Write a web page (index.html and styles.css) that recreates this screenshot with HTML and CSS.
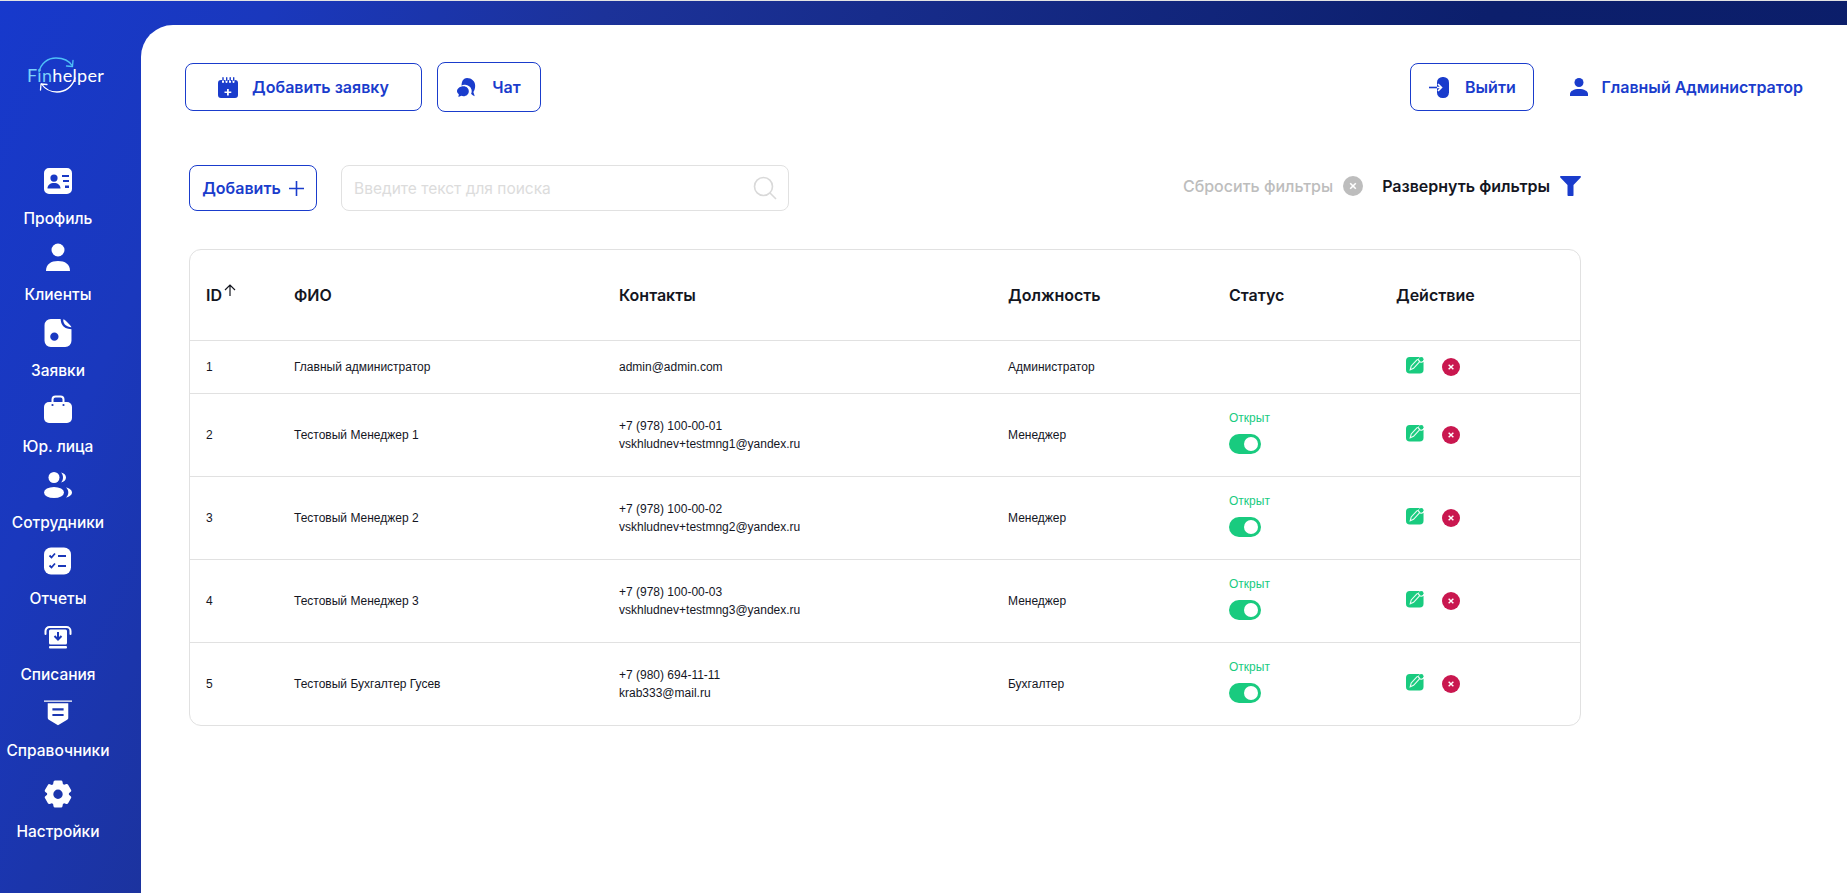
FILE: index.html
```html
<!DOCTYPE html>
<html lang="ru">
<head>
  <meta charset="UTF-8">
  <meta name="viewport" content="width=device-width, initial-scale=1.0">
  <title>Finhelper</title>
  <link rel="stylesheet" href="styles.css">
</head>
<body>
  <div class="app">

    <!-- Left menu -->
    <aside class="sidebar">
      <div class="logo">
        <svg class="logo-arcs" viewBox="0 0 40 36" fill="none" stroke-width="1.300" stroke-linecap="round" stroke-linejoin="round">
          <path d="M2 15C4 6 11 1 19 1c7 0 13 2.500 16.500 8" stroke="#4fc0f7"/>
          <path d="M29.500 9l6 0.500 0.500-6" stroke="#4fc0f7"/>
          <path d="M38 21c-2.500 9-10 14-18 14-6.500 0-12-3-15.500-8" stroke="#fff"/>
          <path d="M10 27.500l-6-0.500-0.500 6" stroke="#fff"/>
        </svg>
        <span class="logo-text"><span class="logo-fin">Fin</span>helper</span>
      </div>

      <nav class="nav">
        <a class="nav-item">
          <svg class="nav-icon" viewBox="0 0 28 26" fill="#fff"><path fill-rule="evenodd" d="M5 0h18a5 5 0 0 1 5 5v16a5 5 0 0 1-5 5H5a5 5 0 0 1-5-5V5a5 5 0 0 1 5-5zm5 6.500a3.600 3.600 0 1 0 0 7.200 3.600 3.600 0 0 0 0-7.200zM3.500 20.500h13c0-3.500-2.800-5.500-6.500-5.500s-6.500 2-6.500 5.500zM18 7v2h7V7zm1 5v2h6v-2zm2 5.500v2.500h4v-2.500z"/></svg>
          <span>Профиль</span>
        </a>
        <a class="nav-item">
          <svg class="nav-icon" viewBox="0 0 26 28" fill="#fff"><circle cx="13" cy="7" r="6.500"/><path d="M1 28c0-7 5-10 12-10s12 3 12 10z"/></svg>
          <span>Клиенты</span>
        </a>
        <a class="nav-item">
          <svg class="nav-icon" viewBox="0 0 26 27" fill="#fff"><path fill-rule="evenodd" d="M6 0h9.500c.5 4 1 9 10.500 10v11a6 6 0 0 1-6 6H6a6 6 0 0 1-6-6V6a6 6 0 0 1 6-6zm3.500 13a4 4 0 1 0 0 8 4 4 0 0 0 0-8z"/><path d="M18 .5c1 0 1.500.3 2.500 1.300l4 4c.8.8 1.300 1.500 1.500 2.200-5-.5-8-3-8-7.500z"/></svg>
          <span>Заявки</span>
        </a>
        <a class="nav-item">
          <svg class="nav-icon" viewBox="0 0 28 28" fill="#fff"><path d="M5 7h18a5 5 0 0 1 5 5v11a5 5 0 0 1-5 5H5a5 5 0 0 1-5-5V12a5 5 0 0 1 5-5z"/><path d="M8.500 9V4.500A3 3 0 0 1 11.500 1.500h5a3 3 0 0 1 3 3V9" fill="none" stroke="#fff" stroke-width="2"/><circle cx="8.500" cy="10" r="1.100" fill="#1a37b8"/><circle cx="19.500" cy="10" r="1.100" fill="#1a37b8"/></svg>
          <span>Юр. лица</span>
        </a>
        <a class="nav-item">
          <svg class="nav-icon" viewBox="0 0 28 28" fill="#fff"><circle cx="10" cy="6.500" r="5.500"/><path d="M17 1.500c3 .6 5 2.500 5 5s-2 4.400-5 5c1.300-1.400 2-3.100 2-5s-.7-3.600-2-5z"/><ellipse cx="10" cy="21.500" rx="10" ry="5.500"/><path d="M22 16.500c3.500.8 6 2.600 6 5s-2.500 4.200-6 5c1.500-1.400 2.300-3.100 2.300-5s-.8-3.600-2.300-5z"/></svg>
          <span>Сотрудники</span>
        </a>
        <a class="nav-item">
          <svg class="nav-icon" viewBox="0 0 28 27" fill="none"><rect width="27" height="27" rx="7" fill="#fff"/><path d="M5.500 8l2 2 3.500-4M5.500 18l2 2 3.500-4" stroke="#1a37b8" stroke-width="1.800"/><path d="M14 8.500h8M14 18.500h8" stroke="#1a37b8" stroke-width="1.800"/></svg>
          <span>Отчеты</span>
        </a>
        <a class="nav-item">
          <svg class="nav-icon" viewBox="0 0 28 24" fill="none"><path d="M1.500 9V6a4 4 0 0 1 4-4h17a4 4 0 0 1 4 4v3" stroke="#fff" stroke-width="2" stroke-linecap="round"/><rect x="5" y="4.500" width="18" height="15" rx="1.500" fill="#fff"/><rect x="5" y="21" width="18" height="2.500" rx="1" fill="#fff"/><path d="M14 7v7M10.500 11l3.500 3.500 3.500-3.500" stroke="#1a37b8" stroke-width="2"/></svg>
          <span>Списания</span>
        </a>
        <a class="nav-item">
          <svg class="nav-icon" viewBox="0 0 30 27" fill="#fff"><path fill-rule="evenodd" d="M0 0h30v1.500H0zM4 3h22v15.500c0 1-.4 1.600-1.200 2.100L15 26.500 5.200 20.600c-.8-.5-1.200-1.100-1.200-2.100zm5 5.500v2.200h12V8.500zm0 6v2.200h12v-2.200z"/></svg>
          <span>Справочники</span>
        </a>
        <a class="nav-item nav-item-last">
          <svg class="nav-icon" viewBox="0 0 28 28" fill="#fff"><path fill-rule="evenodd" d="M11 .5h6a1.500 1.500 0 0 1 1.500 1.300l.4 2.300 1.200.7 2.200-.8a1.500 1.500 0 0 1 1.800.7l3 5.200a1.500 1.500 0 0 1-.4 1.900l-1.800 1.500v1.400l1.800 1.500a1.500 1.500 0 0 1 .4 1.900l-3 5.200a1.500 1.500 0 0 1-1.800.7l-2.200-.8-1.200.7-.4 2.300a1.500 1.500 0 0 1-1.500 1.300h-6a1.500 1.500 0 0 1-1.500-1.300l-.4-2.300-1.200-.7-2.200.8a1.500 1.500 0 0 1-1.800-.7l-3-5.200a1.500 1.500 0 0 1 .4-1.900l1.800-1.500v-1.400L1.300 12a1.500 1.500 0 0 1-.4-1.900l3-5.200a1.500 1.500 0 0 1 1.800-.7l2.200.8 1.200-.7.400-2.300A1.500 1.500 0 0 1 11 .5zM14 9.500a4.700 4.700 0 1 0 0 9.400 4.700 4.700 0 0 0 0-9.400z"/></svg>
          <span>Настройки</span>
        </a>
      </nav>
    </aside>

    <!-- Main white panel -->
    <main class="content">
      <header class="topbar">
        <div class="topbar-left">
          <button class="btn btn-request">
            <svg class="btn-icon" viewBox="0 0 20 21" fill="#1a3ccc"><path fill-rule="evenodd" d="M3 3h1v2a1 1 0 0 0 2 0V3h1.500v2a1 1 0 0 0 2 0V3H11v2a1 1 0 0 0 2 0V3h1.500v2a1 1 0 0 0 2 0V3h.5a3 3 0 0 1 3 3v12a3 3 0 0 1-3 3H3a3 3 0 0 1-3-3V6a3 3 0 0 1 3-3zm6 9v2.500H6.500V16H9v2.500h1.800V16h2.500v-1.500h-2.500V12z"/><rect x="4.300" y="0" width="1.400" height="4" rx=".7"/><rect x="8" y="0" width="1.400" height="4" rx=".7"/><rect x="11.500" y="0" width="1.400" height="4" rx=".7"/><rect x="15" y="0" width="1.400" height="4" rx=".7"/></svg>
            Добавить заявку
          </button>
          <button class="btn btn-chat">
            <svg class="btn-icon" viewBox="0 0 22 21" fill="#1a3ccc"><path d="M11 0c5 0 9 3.500 9 8.500 0 3-1 5.500-2 7l1.500 4.500c-1.500-.3-3-1.200-4-2.500.7-1.500.9-3 .4-4.800-.9-3-3.500-5-6.900-5.200-1.300-.1-3 .3-4 1C5 3 7.500 0 11 0z"/><path d="M7 9c3.600 0 6 2.400 6 5.500S10.600 20 7 20c-.8 0-1.500-.1-2.200-.3L1.500 21l.5-3.200C.7 16.800 0 15.700 0 14.500 0 11.400 3.400 9 7 9z"/></svg>
            Чат
          </button>
        </div>
        <div class="topbar-right">
          <button class="btn btn-exit">
            <svg class="btn-icon" viewBox="0 0 20 21" fill="#1a3ccc"><rect x="8" y="0" width="12" height="21" rx="5.500"/><path d="M0 10.500h8" fill="none" stroke="#1a3ccc" stroke-width="1.600"/><path d="M8 10.500h4M9 7l3.500 3.500L9 14" fill="none" stroke="#fff" stroke-width="1.600"/></svg>
            Выйти
          </button>
          <div class="user">
            <svg class="user-icon" viewBox="0 0 18 18" fill="#1a3ccc"><circle cx="9" cy="4.500" r="4.500"/><path d="M0 18v-2c0-3 4-5 9-5s9 2 9 5v2z"/></svg>
            Главный Администратор
          </div>
        </div>
      </header>

      <div class="toolbar">
        <button class="btn btn-add">
          Добавить
          <svg class="plus-icon" viewBox="0 0 15 15" fill="none" stroke="#1a3ccc" stroke-width="1.600"><path d="M7.500 0v15M0 7.500h15"/></svg>
        </button>
        <div class="search">
          <input class="search-input" type="text" placeholder="Введите текст для поиска">
          <svg class="search-icon" viewBox="0 0 24 24" fill="none" stroke="#d9d9d9" stroke-width="1.600"><circle cx="10.500" cy="10.500" r="9"/><path d="M17 17l6 6"/></svg>
        </div>
        <div class="filters">
          <span class="filter-reset">Сбросить фильтры</span>
          <svg class="filter-x" viewBox="0 0 20 20"><circle cx="10" cy="10" r="10" fill="#bdbdbd"/><path d="M7.200 7.200l5.600 5.600M12.800 7.200l-5.600 5.600" stroke="#fff" stroke-width="1.600"/></svg>
          <span class="filter-open">Развернуть фильтры</span>
          <svg class="filter-funnel" viewBox="0 0 21 20" fill="#1a3ccc"><path d="M1 0h19c.9 0 1.300.9.700 1.500L13.500 9v10.200c0 .6-.4.800-.9.800H8.500c-.5 0-1-.3-1-.8V9L.3 1.500C-.3.900.1 0 1 0z"/></svg>
        </div>
      </div>

      <div class="table-wrap">
        <table class="users">
          <thead>
            <tr>
              <th class="col-id">ID<svg class="sort-icon" viewBox="0 0 12 12" fill="none" stroke="#14161f" stroke-width="1.200"><path d="M6 12V1M1 6l5-5 5 5"/></svg></th>
              <th class="col-name">ФИО</th>
              <th class="col-contacts">Контакты</th>
              <th class="col-post">Должность</th>
              <th class="col-status">Статус</th>
              <th>Действие</th>
            </tr>
          </thead>
          <tbody>
            <tr class="row-short">
              <td>1</td>
              <td>Главный администратор</td>
              <td>admin@admin.com</td>
              <td>Администратор</td>
              <td></td>
              <td>
                <div class="actions">
                  <svg class="act-edit" viewBox="0 0 19 19"><path d="M4 1h10.500c-1 1-1.500 1.500-1.500 3 0 1.800 1.300 3 3 3 1 0 1.800-.3 2.500-1v8.500a4 4 0 0 1-4 4H4a4 4 0 0 1-4-4V5a4 4 0 0 1 4-4z" fill="#19cb7f"/><circle cx="16" cy="3.500" r="2.500" fill="#19cb7f"/><path d="M4.500 14.500l1-4 6-6.500c1-1 3.500 1 2.500 2.500l-6 6.500z" fill="none" stroke="#e9fbf3" stroke-width="1.200"/></svg>
                  <svg class="act-del" viewBox="0 0 19 19"><circle cx="9.500" cy="9.500" r="9.500" fill="#c9174f"/><path d="M7 7l5 5M12 7l-5 5" stroke="#fff" stroke-width="1.500"/></svg>
                </div>
              </td>
            </tr>
            <tr>
              <td>2</td>
              <td>Тестовый Менеджер 1</td>
              <td>+7 (978) 100-00-01<br>vskhludnev+testmng1@yandex.ru</td>
              <td>Менеджер</td>
              <td class="cell-status"><div class="status">Открыт</div><div class="toggle"></div></td>
              <td>
                <div class="actions">
                  <svg class="act-edit" viewBox="0 0 19 19"><path d="M4 1h10.500c-1 1-1.500 1.500-1.500 3 0 1.800 1.300 3 3 3 1 0 1.800-.3 2.500-1v8.500a4 4 0 0 1-4 4H4a4 4 0 0 1-4-4V5a4 4 0 0 1 4-4z" fill="#19cb7f"/><circle cx="16" cy="3.500" r="2.500" fill="#19cb7f"/><path d="M4.500 14.500l1-4 6-6.500c1-1 3.500 1 2.500 2.500l-6 6.500z" fill="none" stroke="#e9fbf3" stroke-width="1.200"/></svg>
                  <svg class="act-del" viewBox="0 0 19 19"><circle cx="9.500" cy="9.500" r="9.500" fill="#c9174f"/><path d="M7 7l5 5M12 7l-5 5" stroke="#fff" stroke-width="1.500"/></svg>
                </div>
              </td>
            </tr>
            <tr>
              <td>3</td>
              <td>Тестовый Менеджер 2</td>
              <td>+7 (978) 100-00-02<br>vskhludnev+testmng2@yandex.ru</td>
              <td>Менеджер</td>
              <td class="cell-status"><div class="status">Открыт</div><div class="toggle"></div></td>
              <td>
                <div class="actions">
                  <svg class="act-edit" viewBox="0 0 19 19"><path d="M4 1h10.500c-1 1-1.500 1.500-1.500 3 0 1.800 1.300 3 3 3 1 0 1.800-.3 2.500-1v8.500a4 4 0 0 1-4 4H4a4 4 0 0 1-4-4V5a4 4 0 0 1 4-4z" fill="#19cb7f"/><circle cx="16" cy="3.500" r="2.500" fill="#19cb7f"/><path d="M4.500 14.500l1-4 6-6.500c1-1 3.500 1 2.500 2.500l-6 6.500z" fill="none" stroke="#e9fbf3" stroke-width="1.200"/></svg>
                  <svg class="act-del" viewBox="0 0 19 19"><circle cx="9.500" cy="9.500" r="9.500" fill="#c9174f"/><path d="M7 7l5 5M12 7l-5 5" stroke="#fff" stroke-width="1.500"/></svg>
                </div>
              </td>
            </tr>
            <tr>
              <td>4</td>
              <td>Тестовый Менеджер 3</td>
              <td>+7 (978) 100-00-03<br>vskhludnev+testmng3@yandex.ru</td>
              <td>Менеджер</td>
              <td class="cell-status"><div class="status">Открыт</div><div class="toggle"></div></td>
              <td>
                <div class="actions">
                  <svg class="act-edit" viewBox="0 0 19 19"><path d="M4 1h10.500c-1 1-1.500 1.500-1.500 3 0 1.800 1.300 3 3 3 1 0 1.800-.3 2.500-1v8.500a4 4 0 0 1-4 4H4a4 4 0 0 1-4-4V5a4 4 0 0 1 4-4z" fill="#19cb7f"/><circle cx="16" cy="3.500" r="2.500" fill="#19cb7f"/><path d="M4.500 14.500l1-4 6-6.500c1-1 3.500 1 2.500 2.500l-6 6.500z" fill="none" stroke="#e9fbf3" stroke-width="1.200"/></svg>
                  <svg class="act-del" viewBox="0 0 19 19"><circle cx="9.500" cy="9.500" r="9.500" fill="#c9174f"/><path d="M7 7l5 5M12 7l-5 5" stroke="#fff" stroke-width="1.500"/></svg>
                </div>
              </td>
            </tr>
            <tr>
              <td>5</td>
              <td>Тестовый Бухгалтер Гусев</td>
              <td>+7 (980) 694-11-11<br>krab333@mail.ru</td>
              <td>Бухгалтер</td>
              <td class="cell-status"><div class="status">Открыт</div><div class="toggle"></div></td>
              <td>
                <div class="actions">
                  <svg class="act-edit" viewBox="0 0 19 19"><path d="M4 1h10.500c-1 1-1.500 1.500-1.500 3 0 1.800 1.300 3 3 3 1 0 1.800-.3 2.500-1v8.500a4 4 0 0 1-4 4H4a4 4 0 0 1-4-4V5a4 4 0 0 1 4-4z" fill="#19cb7f"/><circle cx="16" cy="3.500" r="2.500" fill="#19cb7f"/><path d="M4.500 14.500l1-4 6-6.500c1-1 3.500 1 2.500 2.500l-6 6.500z" fill="none" stroke="#e9fbf3" stroke-width="1.200"/></svg>
                  <svg class="act-del" viewBox="0 0 19 19"><circle cx="9.500" cy="9.500" r="9.500" fill="#c9174f"/><path d="M7 7l5 5M12 7l-5 5" stroke="#fff" stroke-width="1.500"/></svg>
                </div>
              </td>
            </tr>
          </tbody>
        </table>
      </div>
    </main>
  </div>
</body>
</html>
```

FILE: styles.css
```css
/* Page */
html, body {
  height: 100%;
}

body {
  margin: 0;
  overflow: hidden;
  font-family: Inter, 'Liberation Sans', sans-serif;
  color: #14161f;
  background: #fff;
}

.app {
  display: flex;
  box-sizing: border-box;
  height: 100vh;
  border-top: 1px solid #e3e3e3;
  background: linear-gradient(115deg, #1739cc 0%, #1a38bd 12%, #1c3299 27%, #0c1f6c 66%, #0b1d68 100%);
}

/* Sidebar */
.sidebar {
  flex: 0 0 141px;
  box-sizing: border-box;
  padding-right: 25px;
  display: flex;
  flex-direction: column;
  align-items: center;
  color: #fff;
}

.logo {
  position: relative;
  width: 116px;
  height: 36px;
  margin-top: 56px;
  display: flex;
  align-items: center;
  justify-content: center;
}

.logo-arcs {
  position: absolute;
  left: 37px;
  top: 0;
  width: 40px;
  height: 36px;
}

.logo-text {
  margin-left: 15px;
  font-family: Lato, sans-serif;
  font-size: 18px;
  letter-spacing: .3px;
  white-space: nowrap;
}

.logo-fin {
  color: #7cd0fa;
}

.nav {
  display: flex;
  flex-direction: column;
  align-items: center;
  margin-top: 59px;
}

.nav-item {
  display: flex;
  flex-direction: column;
  align-items: center;
  justify-content: flex-end;
  height: 76px;
  width: 116px;
  font-size: 15.500px;
  font-weight: 500;
  line-height: 18px;
}

.nav-item span {
  margin-top: 15px;
}

.nav-item-last {
  height: 81px;
}

.nav-icon {
  display: block;
  width: 28px;
  height: 28px;
}

/* Main panel */
.content {
  flex: 1;
  margin-top: 24px;
  padding: 38px 16px 0 44px;
  background: #fff;
  border-radius: 32px 0 0 0;
}

.topbar {
  display: flex;
  justify-content: space-between;
  align-items: center;
  height: 48px;
}

.topbar-left,
.topbar-right {
  display: flex;
  align-items: center;
}

.topbar-left {
  gap: 15px;
}

/* Buttons */
.btn {
  display: flex;
  align-items: center;
  justify-content: center;
  height: 48px;
  padding: 0;
  font-family: Inter, sans-serif;
  font-size: 16px;
  font-weight: 600;
  color: #1a3ccc;
  background: #fff;
  border: 1px solid #1a3ccc;
  border-radius: 8px;
}

.btn-icon {
  flex: none;
  width: 20px;
  height: 21px;
}

.btn-request {
  width: 237px;
  gap: 14px;
}

.btn-chat {
  width: 104px;
  height: 50px;
  gap: 15px;
}

.btn-exit {
  width: 124px;
  gap: 16px;
}

.user {
  display: flex;
  align-items: center;
  gap: 13px;
  margin-left: 36px;
  margin-right: 28px;
  font-size: 16px;
  font-weight: 600;
  color: #1a3ccc;
}

.user-icon {
  width: 18px;
  height: 18px;
}

/* Toolbar */
.toolbar {
  display: flex;
  align-items: center;
  width: 1392px;
  height: 46px;
  margin: 54px 0 38px 4px;
}

.btn-add {
  width: 128px;
  height: 46px;
  gap: 8px;
}

.plus-icon {
  width: 15px;
  height: 15px;
}

.search {
  position: relative;
  width: 448px;
  margin-left: 24px;
}

.search-input {
  display: block;
  width: 100%;
  height: 46px;
  box-sizing: border-box;
  padding: 0 50px 0 12px;
  font-family: Inter, sans-serif;
  font-size: 15.500px;
  border: 1px solid #e1e1e1;
  border-radius: 8px;
  outline: none;
}

.search-input::placeholder {
  color: #dcdcdc;
}

.search-icon {
  position: absolute;
  right: 12px;
  top: 11px;
  width: 24px;
  height: 24px;
}

.filters {
  display: flex;
  align-items: center;
  margin-left: auto;
  font-size: 16px;
  font-weight: 500;
  margin-top: -4px;
}

.filter-reset {
  color: #bdbdbd;
}

.filter-x {
  width: 20px;
  height: 20px;
  margin: 0 19px 0 10px;
}

.filter-open {
  font-weight: 600;
}

.filter-funnel {
  width: 21px;
  height: 20px;
  margin-left: 10px;
}

/* Table */
.table-wrap {
  width: 1392px;
  margin-left: 4px;
  box-sizing: border-box;
  border: 1px solid #e1e1e1;
  border-radius: 12px;
  overflow: hidden;
}

.users {
  width: 100%;
  border-collapse: collapse;
  table-layout: fixed;
}

.users th {
  box-sizing: border-box;
  height: 90px;
  padding: 0 0 0 16px;
  text-align: left;
  font-size: 16px;
  font-weight: 600;
  vertical-align: middle;
}

.users td {
  box-sizing: border-box;
  height: 83px;
  padding: 0 0 0 16px;
  font-family: 'Liberation Sans', Arial, sans-serif;
  font-size: 12px;
  line-height: 18px;
  border-top: 1px solid #e1e1e1;
  vertical-align: middle;
}

.users .row-short td {
  height: 53px;
}

.col-id { width: 88px; }
.col-name { width: 325px; }
.col-contacts { width: 389px; }
.col-post { width: 221px; }
.col-status { width: 167px; }

.sort-icon {
  width: 12px;
  height: 12px;
  margin-left: 2px;
  vertical-align: 5px;
}

.users .cell-status {
  padding-bottom: 6px;
}

.status {
  color: #19cb7f;
}

.toggle {
  position: relative;
  width: 32px;
  height: 20px;
  margin-top: 7px;
  background: #19cb7f;
  border-radius: 10px;
}

.toggle::after {
  content: "";
  position: absolute;
  right: 3px;
  top: 3px;
  width: 14px;
  height: 14px;
  background: #fff;
  border-radius: 50%;
}

.actions {
  display: flex;
  align-items: center;
  gap: 18px;
  padding-left: 10px;
}

.act-edit,
.act-del {
  width: 18px;
  height: 18px;
}

.act-edit {
  margin-bottom: 4px;
}
```
